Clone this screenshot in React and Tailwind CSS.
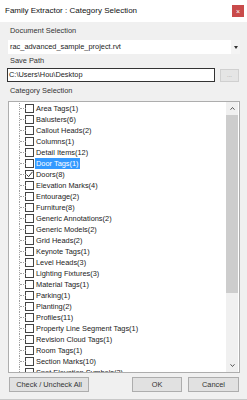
import React from 'react'

const items = [
  'Area Tags(1)',
  'Balusters(6)',
  'Callout Heads(2)',
  'Columns(1)',
  'Detail Items(12)',
  'Door Tags(1)',
  'Doors(8)',
  'Elevation Marks(4)',
  'Entourage(2)',
  'Furniture(8)',
  'Generic Annotations(2)',
  'Generic Models(2)',
  'Grid Heads(2)',
  'Keynote Tags(1)',
  'Level Heads(3)',
  'Lighting Fixtures(3)',
  'Material Tags(1)',
  'Parking(1)',
  'Planting(2)',
  'Profiles(11)',
  'Property Line Segment Tags(1)',
  'Revision Cloud Tags(1)',
  'Room Tags(1)',
  'Section Marks(10)',
  'Spot Elevation Symbols(3)',
]

function TreeRow({ label, checked, selected }) {
  return (
    <div className="flex items-center h-[11px] shrink-0">
      {/* dotted connector */}
      <div className="relative w-[6px] h-full border-l border-dotted border-[#a0a0a0]">
        <div className="absolute left-0 top-[5px] w-[6px] border-t border-dotted border-[#a0a0a0]" />
      </div>
      <div className="w-[9px] h-[9px] border border-[#444] bg-white flex items-center justify-center">
        {checked && (
          <svg width="7" height="7" viewBox="0 0 7 7">
            <path d="M0.5 3.5 L2.6 5.6 L6.5 0.8" fill="none" stroke="#333" strokeWidth="1" />
          </svg>
        )}
      </div>
      <span
        className={
          'ml-[1px] px-[1px] leading-[11px] whitespace-nowrap ' +
          (selected ? 'bg-[#3399ff] text-white' : 'text-[#222]')
        }
      >
        {label}
      </span>
    </div>
  )
}

export default function App() {
  return (
    <div
      className="w-[247px] h-[400px] bg-[#f0f0f0] flex flex-col text-[7.4px] text-[#333] overflow-hidden border-b border-[#c8c8c8]"
      style={{ fontFamily: '"Liberation Sans", Arial, sans-serif' }}
    >
      {/* title bar */}
      <div className="h-[22px] bg-white flex items-center justify-between pl-[5px] pr-[3px] shrink-0">
        <span className="text-[8px] text-[#111]">Family Extractor : Category Selection</span>
        <div className="w-[12px] h-[12px] bg-[#c94a4a] flex items-center justify-center text-white text-[7px] leading-none">
          ×
        </div>
      </div>

      <div className="flex flex-col px-[8px]">
        <div className="h-[10px] mt-[4px] leading-[10px] pl-[2px]">Document Selection</div>
        <div className="mt-[4px] h-[14px] bg-white flex items-center justify-between w-[232px]">
          <span className="pl-[2px] text-[#222]">rac_advanced_sample_project.rvt</span>
          <div className="w-[9px] h-full bg-[#f4f4f4] flex items-center justify-center">
            <svg width="4" height="3" viewBox="0 0 4 3">
              <path d="M0 0 H4 L2 3 Z" fill="#333" />
            </svg>
          </div>
        </div>

        <div className="h-[10px] mt-[2px] leading-[10px] pl-[2px]">Save Path</div>
        <div className="mt-[2px] flex items-center">
          <div className="-ml-[1px] w-[208px] h-[14px] bg-white border border-[#333] flex items-center pl-[1px] text-[#222]">
            C:\Users\Hou\Desktop
          </div>
          <div className="ml-[5px] w-[19px] h-[13px] bg-[#e5e5e5] border border-[#d0d0d0] flex items-center justify-center text-[#999] text-[6px]">
            ...
          </div>
        </div>

        <div className="h-[10px] mt-[4px] leading-[10px] pl-[2px]">Category Selection</div>

        {/* tree */}
        <div className="mt-[5px] w-[232px] h-[272px] bg-white border border-[#adadad] flex">
          <div className="flex-1 flex flex-col pl-[10px] pt-[1px] overflow-hidden">
            {items.map((it) => (
              <TreeRow
                key={it}
                label={it}
                checked={it === 'Doors(8)'}
                selected={it === 'Door Tags(1)'}
              />
            ))}
          </div>
          <div className="w-[12px] flex flex-col bg-[#f0f0f0] mr-[1px]">
            <div className="h-[13px] flex items-center justify-center">
              <svg width="5" height="3" viewBox="0 0 5 3">
                <path d="M0.5 2.7 L2.5 0.5 L4.5 2.7" fill="none" stroke="#555" strokeWidth="1" />
              </svg>
            </div>
            <div className="h-[178px] bg-[#cdcdcd]" />
            <div className="flex-1" />
            <div className="h-[13px] flex items-center justify-center">
              <svg width="5" height="3" viewBox="0 0 5 3">
                <path d="M0.5 0.3 L2.5 2.5 L4.5 0.3" fill="none" stroke="#555" strokeWidth="1" />
              </svg>
            </div>
          </div>
        </div>

        {/* buttons */}
        <div className="mt-[4px] flex items-center">
          <div className="ml-[1px] w-[80px] h-[15px] bg-[#e1e1e1] border border-[#adadad] flex items-center justify-center text-[#333]">
            Check / Uncheck All
          </div>
          <div className="ml-auto w-[50px] h-[15px] bg-[#e1e1e1] border border-[#adadad] flex items-center justify-center text-[#333]">
            OK
          </div>
          <div className="ml-[6px] w-[51px] h-[15px] bg-[#e1e1e1] border border-[#adadad] flex items-center justify-center text-[#333]">
            Cancel
          </div>
        </div>
      </div>
    </div>
  )
}
